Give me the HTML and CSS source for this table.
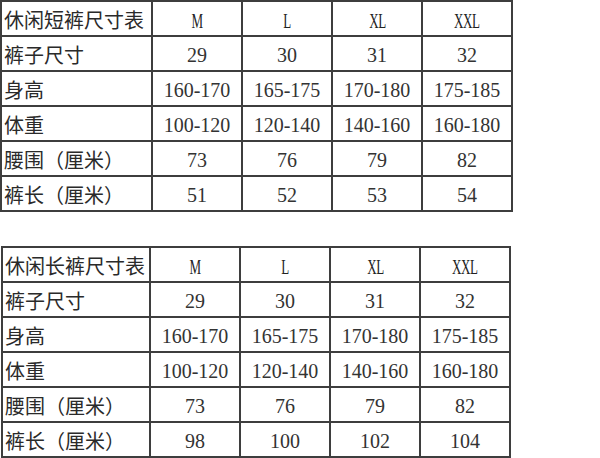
FILE: index.html
```html
<!DOCTYPE html>
<html lang="zh">
<head>
<meta charset="utf-8">
<title>尺寸表</title>
<link rel="stylesheet" href="styles.css">
</head>
<body>
<div class="sheet">
  <div class="chart chart-short">
    <div class="cell label">休闲短裤尺寸表</div>
    <div class="cell size"><span class="glyph">M</span></div>
    <div class="cell size"><span class="glyph">L</span></div>
    <div class="cell size"><span class="glyph">XL</span></div>
    <div class="cell size"><span class="glyph">XXL</span></div>

    <div class="cell label">裤子尺寸</div>
    <div class="cell">29</div>
    <div class="cell">30</div>
    <div class="cell">31</div>
    <div class="cell">32</div>

    <div class="cell label">身高</div>
    <div class="cell">160-170</div>
    <div class="cell">165-175</div>
    <div class="cell">170-180</div>
    <div class="cell">175-185</div>

    <div class="cell label">体重</div>
    <div class="cell">100-120</div>
    <div class="cell">120-140</div>
    <div class="cell">140-160</div>
    <div class="cell">160-180</div>

    <div class="cell label">腰围（厘米）</div>
    <div class="cell">73</div>
    <div class="cell">76</div>
    <div class="cell">79</div>
    <div class="cell">82</div>

    <div class="cell label">裤长（厘米）</div>
    <div class="cell">51</div>
    <div class="cell">52</div>
    <div class="cell">53</div>
    <div class="cell">54</div>
  </div>

  <div class="chart chart-long">
    <div class="cell label">休闲长裤尺寸表</div>
    <div class="cell size"><span class="glyph">M</span></div>
    <div class="cell size"><span class="glyph">L</span></div>
    <div class="cell size"><span class="glyph">XL</span></div>
    <div class="cell size"><span class="glyph">XXL</span></div>

    <div class="cell label">裤子尺寸</div>
    <div class="cell">29</div>
    <div class="cell">30</div>
    <div class="cell">31</div>
    <div class="cell">32</div>

    <div class="cell label">身高</div>
    <div class="cell">160-170</div>
    <div class="cell">165-175</div>
    <div class="cell">170-180</div>
    <div class="cell">175-185</div>

    <div class="cell label">体重</div>
    <div class="cell">100-120</div>
    <div class="cell">120-140</div>
    <div class="cell">140-160</div>
    <div class="cell">160-180</div>

    <div class="cell label">腰围（厘米）</div>
    <div class="cell">73</div>
    <div class="cell">76</div>
    <div class="cell">79</div>
    <div class="cell">82</div>

    <div class="cell label">裤长（厘米）</div>
    <div class="cell">98</div>
    <div class="cell">100</div>
    <div class="cell">102</div>
    <div class="cell">104</div>
  </div>
</div>
</body>
</html>
```

FILE: styles.css
```css
html, body {
  margin: 0;
  padding: 0;
  background: #ffffff;
}

.sheet {
  display: flex;
  flex-direction: column;
  align-items: flex-start;
}

.chart {
  display: grid;
  grid-template-columns: 149px repeat(4, 88px);
  grid-auto-rows: 33px;
  gap: 2px;
  padding: 2px;
  background: #3e3e3e;
}

.chart-long {
  margin: 34px 0 0 1px;
  grid-template-columns: 146px repeat(4, 88px);
}

.cell {
  background: #ffffff;
  display: flex;
  align-items: center;
  justify-content: center;
  box-sizing: border-box;
  padding-top: 3px;
  font-family: "Liberation Serif", serif;
  font-size: 20px;
  line-height: 1;
  color: #333333;
  white-space: nowrap;
}

.label {
  justify-content: flex-start;
  padding-left: 2px;
  font-family: "Noto Sans CJK SC", sans-serif;
  color: #2a2a2a;
}

.size {
  padding-top: 5px;
}

.glyph {
  display: inline-block;
  font-size: 21px;
  transform: scaleX(0.62);
  letter-spacing: -0.5px;
  color: #222222;
}
```
